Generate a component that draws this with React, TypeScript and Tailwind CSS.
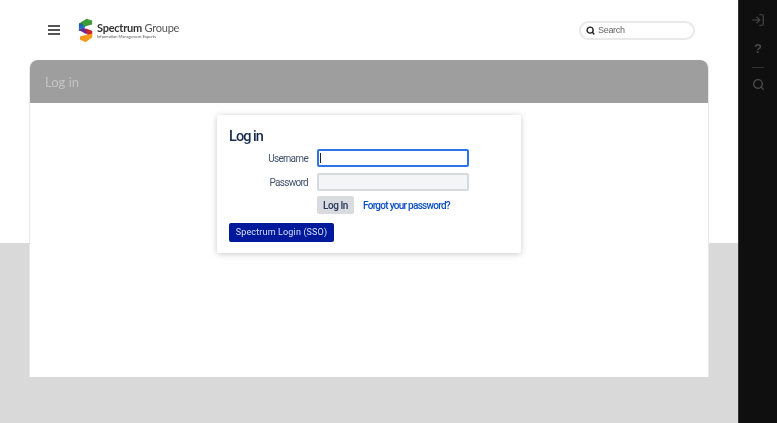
import { Search, LogIn } from "lucide-react";

function Logo() {
  return (
    <div className="flex items-center gap-[3px]">
      <svg width="16" height="25" viewBox="0 0 17 25">
        <path d="M1 5 L9 0 L15 2 L15 6 L8 8 L1 9 Z" fill="#3f9b35" />
        <path d="M1 5 L5 5 L5 11 L1 13 Z" fill="#1f5fb0" />
        <path d="M1 9 L8 7 L6 13 L1 13 Z" fill="#2a6fc0" />
        <path d="M1 12 L6 10 L15 13 L15 16 L8 16 Z" fill="#6a2a8c" />
        <path d="M8 10 L15 13 L15 18 L10 17 Z" fill="#d1232a" />
        <path d="M15 16 L15 20 L8 25 L2 22 L2 19 L9 17 Z" fill="#f39a1e" />
      </svg>
      <div className="flex flex-col">
        <div className="text-[11px] leading-[13px] tracking-[-0.25px] whitespace-nowrap font-['Lato',sans-serif] text-[#333]">
          <span className="font-bold">Spectrum</span>{" "}
          <span className="text-[#555]">Groupe</span>
        </div>
        <div className="text-[4px] leading-[5px] whitespace-nowrap font-['Lato',sans-serif] text-[#555]">
          Information Management Experts
        </div>
      </div>
    </div>
  );
}

function Header() {
  return (
    <header className="flex h-[60px] items-center justify-between pl-[48px] pr-[43px]">
      <div className="flex items-center gap-[18px]">
        <div className="flex w-[12px] flex-col gap-[2.5px]">
          <div className="h-[1.5px] bg-[#555]" />
          <div className="h-[1.5px] bg-[#555]" />
          <div className="h-[1.5px] bg-[#555]" />
        </div>
        <Logo />
      </div>
      <div className="mt-[1px] flex h-[19px] w-[116px] items-center gap-[3px] rounded-full border-2 border-[#e9e9e9] bg-white pl-[5px]">
        <Search size={9} strokeWidth={3.8} className="text-[#222]" />
        <span className="text-[9px] tracking-[-0.3px] text-[#666] font-['Liberation_Sans',sans-serif]">Search</span>
      </div>
    </header>
  );
}

function LoginBox() {
  return (
    <div className="mx-auto mt-[12px] h-[138px] w-[304px] rounded-[2px] bg-white pl-[12px] pt-[13px] shadow-[0_1px_6px_rgba(0,0,0,0.22)] font-['Roboto',sans-serif]">
      <h2 className="mb-[4px] text-[14.5px] font-medium leading-[17px] tracking-[-0.95px] text-[#172b4d]">Log in</h2>
      <div className="flex h-[18px] items-center">
        <span className="w-[79px] text-right text-[10px] tracking-[-0.7px] text-[#42526e]">Username</span>
        <div className="ml-[9px] flex h-[18px] w-[152px] items-center rounded-[2px] border-2 border-[#2f74e6] bg-white pl-[1px]">
          <div className="h-[10px] w-px bg-[#222]" />
        </div>
      </div>
      <div className="mt-[6px] flex h-[18px] items-center">
        <span className="w-[79px] text-right text-[10px] tracking-[-0.7px] text-[#42526e]">Password</span>
        <div className="ml-[9px] h-[18px] w-[152px] rounded-[2px] border-2 border-[#d5d9e0] bg-[#f4f5f7]" />
      </div>
      <div className="mt-[5px] flex h-[18px] items-center pl-[88px]">
        <button className="h-[18px] w-[37px] rounded-[2px] bg-[#d9dbe0] text-[10px] font-medium tracking-[-0.45px] text-[#253858]">Log In</button>
        <a className="ml-[9px] text-[10px] font-medium tracking-[-0.72px] text-[#0b4fc4]">Forgot your password?</a>
      </div>
      <button className="mt-[9px] h-[19px] w-[105px] rounded-[2px] bg-[#00189b] text-[9px] tracking-[0.15px] text-[#d8e0f5]">
        Spectrum Login (SSO)
      </button>
    </div>
  );
}

export default function App() {
  return (
    <div className="flex h-[423px] w-[777px] overflow-hidden blur-[0.4px]">
      <main className="flex-1 bg-[linear-gradient(#ffffff_243px,#d9d9d9_243px)]">
        <Header />
        <section className="mx-[29px] h-[317px] rounded-t-[8px] border-x border-[#e8e8ec] bg-white">
          <div className="h-[43px] rounded-t-[8px] bg-[#9e9e9e] pl-[15px] pt-[14px] text-[13px] leading-[17px] text-[#c4c4c4] font-['Lato',sans-serif]">
            Log in
          </div>
          <LoginBox />
        </section>
      </main>
      <aside className="flex w-[39px] flex-col items-center border-l border-[#333] bg-[#0f0f0f] pt-[13px] text-[#4a4a4a]">
        <LogIn size={14} strokeWidth={2} />
        <span className="mt-[14px] text-[13px] font-bold leading-[15px] font-['Liberation_Sans',sans-serif]">?</span>
        <div className="mt-[11px] h-px w-[12px] bg-[#333]" />
        <Search size={13} strokeWidth={2.6} className="mt-[10px]" />
      </aside>
    </div>
  );
}
